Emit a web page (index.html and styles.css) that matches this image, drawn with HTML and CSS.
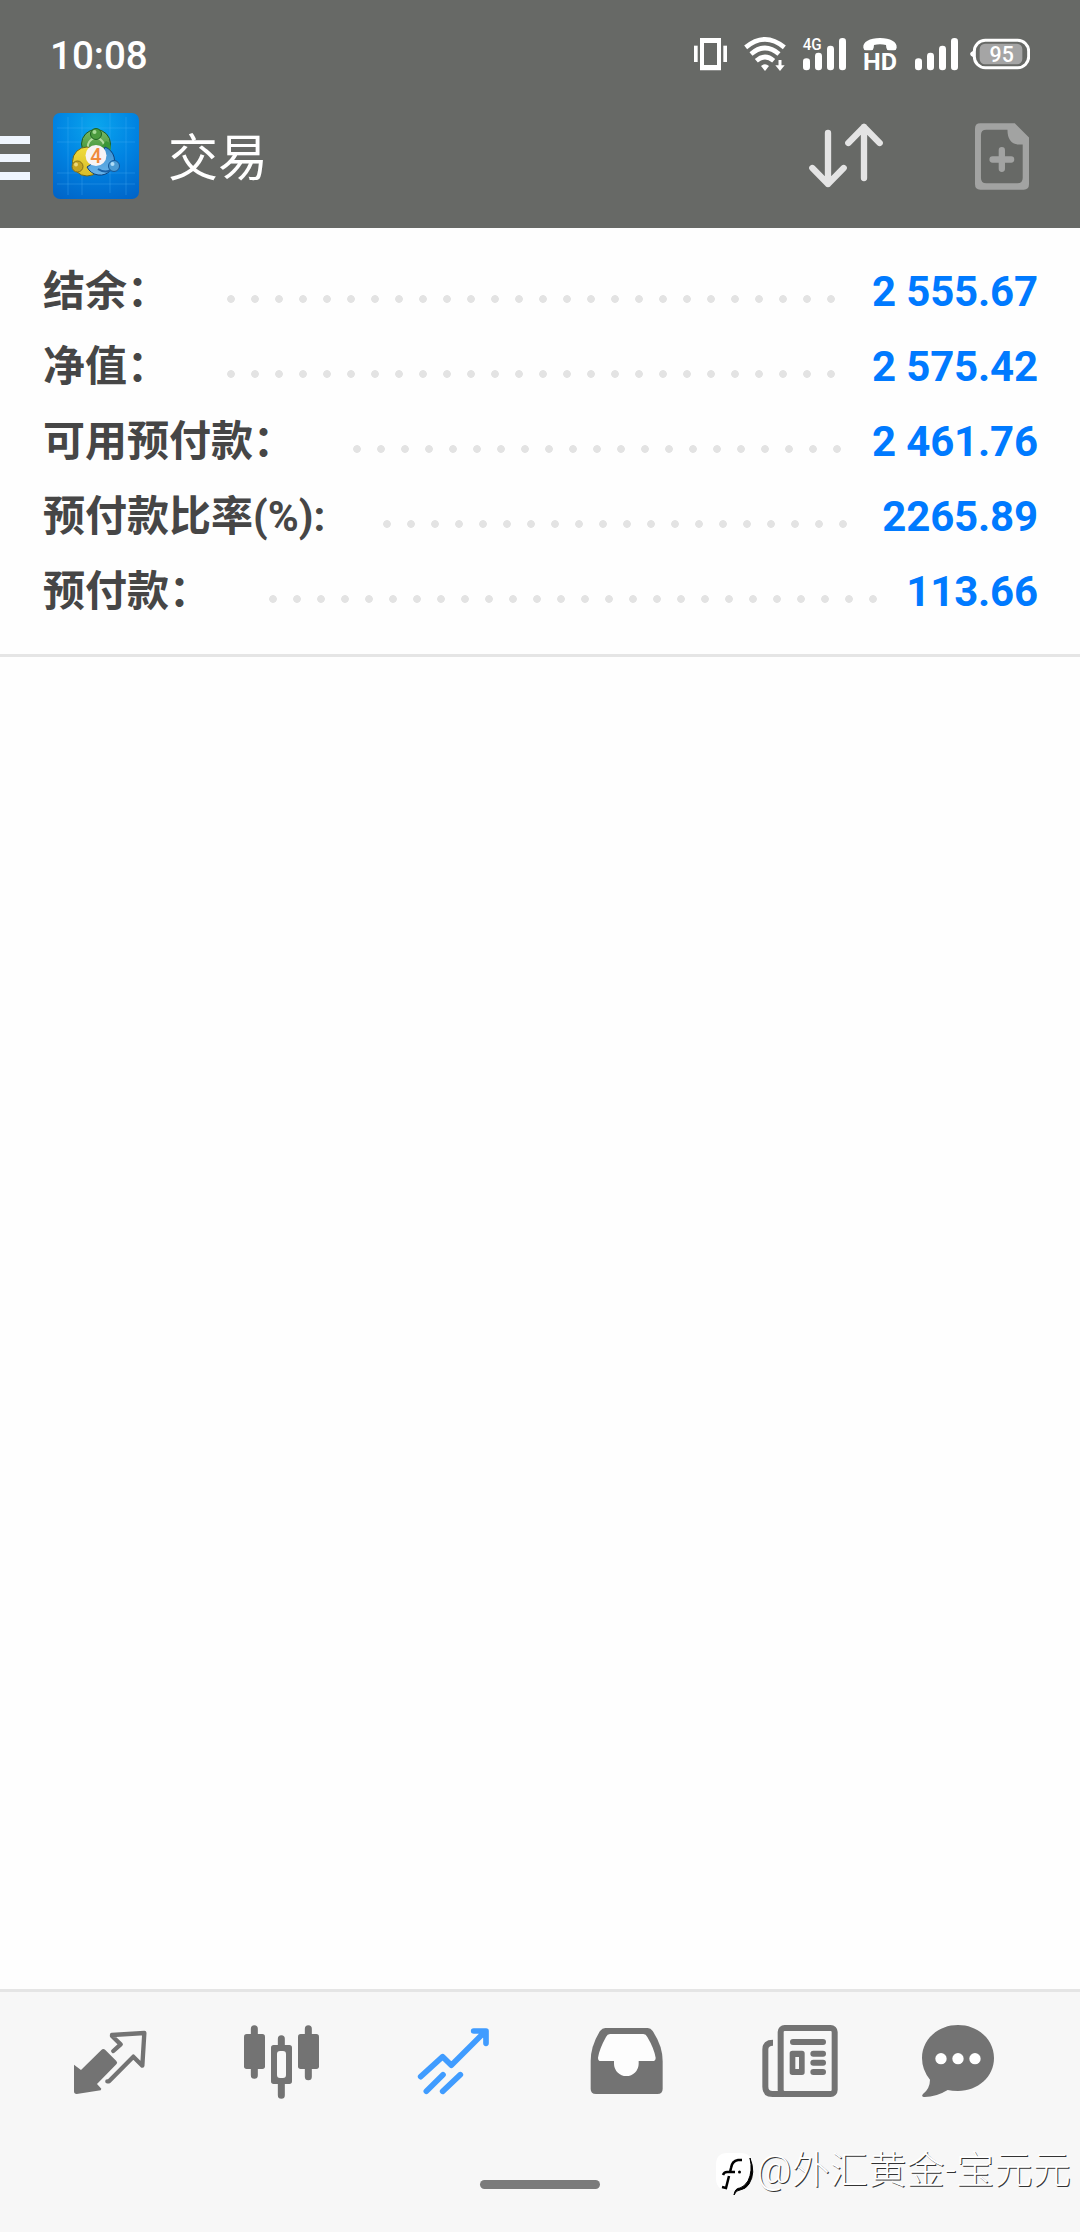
FILE: index.html
```html
<!DOCTYPE html>
<html lang="zh-CN">
<head>
    <meta charset="UTF-8">
    <title>交易</title>
    <link rel="stylesheet" href="styles.css">
</head>
<body>
<header class="header">
    <div class="status-bar">
        <span class="time">10:08</span>
        <div class="status-icons">
            <!-- vibrate -->
            <svg width="35" height="36" viewBox="39 48 105 108" fill="#fff">
                <path d="M60 54h63v97H60zM72 69v66h39V69z" fill-rule="evenodd"/>
                <rect x="42" y="77" width="11" height="49"/>
                <rect x="130" y="77" width="11" height="49"/>
            </svg>
            <!-- wifi -->
            <svg width="42" height="36" viewBox="192 48 126 108" fill="none" stroke="#fff" stroke-width="14">
                <path d="M197 82Q255 34 313 82"/>
                <path d="M213 102Q255 66 297 102"/>
                <path d="M229 122Q255 100 281 122"/>
                <path d="M243 138q12-10 24 0l-12 15z" fill="#fff" stroke="none"/>
                <path d="M300 120v22" stroke-width="9"/>
                <path d="M286 136h28l-14 17z" fill="#fff" stroke="none"/>
            </svg>
            <!-- 4G signal -->
            <svg width="45" height="36" viewBox="366 48 135 108" fill="#fff">
                <text class="net" x="368" y="90" textLength="57" lengthAdjust="spacingAndGlyphs">4G</text>
                <rect x="369" y="115" width="21" height="36" rx="10"/>
                <rect x="405" y="98" width="21" height="53" rx="10"/>
                <rect x="441" y="77" width="21" height="74" rx="10"/>
                <rect x="477" y="54" width="21" height="97" rx="10"/>
            </svg>
            <!-- HD call -->
            <svg class="hd-icon" width="34" height="36" viewBox="549 48 102 108" fill="#fff">
                <path d="M550 83C548 66 569 54 600 54s52 12 50 29q-1 8-8 8h-15q-7 0-8-8l-1-8q-18-5-36 0l-1 8q-1 8-8 8h-15q-7 0-8-8z"/>
                <text class="hd" x="549" y="150" textLength="102" lengthAdjust="spacingAndGlyphs">HD</text>
            </svg>
            <!-- signal -->
            <svg class="signal" width="45" height="36" viewBox="702 48 135 108" fill="#fff">
                <rect x="705" y="115" width="21" height="36" rx="10"/>
                <rect x="741" y="98" width="21" height="53" rx="10"/>
                <rect x="777" y="77" width="21" height="74" rx="10"/>
                <rect x="813" y="54" width="21" height="97" rx="10"/>
            </svg>
            <!-- battery -->
            <svg width="60" height="36" viewBox="870 48 180 108">
                <path d="M882 91l-9 6q-5 5 0 10l9 6z" fill="#fff"/>
                <rect x="883" y="61" width="163" height="82" rx="33" fill="none" stroke="#fff" stroke-width="9"/>
                <rect x="899" y="71" width="128" height="62" rx="16" fill="#a5a5a5"/>
                <text class="battery" x="965" y="126" text-anchor="middle">95</text>
            </svg>
        </div>
    </div>
    <div class="toolbar">
        <div class="menu"><i></i><i></i><i></i></div>
        <svg class="logo" width="86" height="86" viewBox="0 0 86 86">
            <defs>
                <radialGradient id="bg" cx=".5" cy=".15" r=".95">
                    <stop offset="0" stop-color="#0aa6ee"/>
                    <stop offset=".5" stop-color="#0083e2"/>
                    <stop offset="1" stop-color="#0064c8"/>
                </radialGradient>
                <linearGradient id="green" x2="0" y2="1">
                    <stop offset="0" stop-color="#7cba66"/>
                    <stop offset="1" stop-color="#2f8a2a"/>
                </linearGradient>
                <linearGradient id="gold" x2="0" y2="1">
                    <stop offset="0" stop-color="#f0dc3c"/>
                    <stop offset="1" stop-color="#d8bc2a"/>
                </linearGradient>
                <linearGradient id="blue" x2="0" y2="1">
                    <stop offset="0" stop-color="#3a8fd0"/>
                    <stop offset="1" stop-color="#6ab4ea"/>
                </linearGradient>
            </defs>
            <rect width="86" height="86" rx="7" fill="url(#bg)"/>
            <path d="M15 4v78M29 4v78M57 0v80M73 4v78M4 15h78M4 29h78M4 60h78M4 71h78" stroke="#4fb4f4" stroke-opacity=".3"/>
            <circle cx="43" cy="31" r="14.5" fill="url(#green)" stroke="#1c5a24"/>
            <path d="M36 37a8 8 0 1 1 14 0" fill="none" stroke="#b4dca0" stroke-width="2"/>
            <circle cx="34" cy="48.5" r="14.5" fill="url(#gold)" stroke="#6b661c"/>
            <path d="M57 30q3 10-5 20L43 40l10-12z" fill="#3b9636"/>
            <path d="M52 34a14.5 14.5 0 1 1-18 20l12-8z" fill="url(#blue)" stroke="#0b4380"/>
            <path d="M45 56q9 6 16-2" fill="none" stroke="#1a62a8" stroke-width="2"/>
            <circle cx="43" cy="21" r="5.5" fill="#4b9b3e" stroke="#1e6322"/>
            <circle cx="24.5" cy="53.5" r="5.5" fill="#c5a521" stroke="#85701a"/>
            <circle cx="61" cy="53" r="5.5" fill="#4b9bd4" stroke="#155796"/>
            <circle cx="41.5" cy="19" r="2" fill="#a4d894"/>
            <circle cx="23" cy="51.5" r="2" fill="#ecd878"/>
            <circle cx="59.5" cy="51" r="2" fill="#b0dcf6"/>
            <circle cx="43" cy="42.5" r="10.5" fill="#f6f3f5"/>
            <text class="logo-num" x="43" y="49.5" text-anchor="middle">4</text>
        </svg>
        <h1>交易</h1>
        <svg class="sort" width="76" height="68" viewBox="84 66 228 204" fill="none" stroke="#e4e4e4" stroke-width="19" stroke-linecap="round" stroke-linejoin="round">
            <path d="M144 99v153M97 204l47 48 47-48"/>
            <path d="M252 234V81M205 129l47-48 47 48"/>
        </svg>
        <svg class="new-order" width="54" height="67" viewBox="585 68 163 200">
            <path fill="#a2a3a2" fill-rule="evenodd" d="M601 68h104l43 43v141q0 16-16 16H601q-16 0-16-16V84q0-16 16-16zM619 87q-16 0-16 16v130q0 16 16 16h94q16 0 16-16V132h-14q-32-4-32-45z"/>
            <path d="M638 177h56M666 149v56" stroke="#a2a3a2" stroke-width="19" stroke-linecap="round"/>
        </svg>
    </div>
</header>

<main class="account">
    <div class="row"><span class="label">结余：</span><span class="dots"></span><span class="value">2 555.67</span></div>
    <div class="row"><span class="label">净值：</span><span class="dots"></span><span class="value">2 575.42</span></div>
    <div class="row"><span class="label">可用预付款：</span><span class="dots"></span><span class="value">2 461.76</span></div>
    <div class="row"><span class="label">预付款比率(%):</span><span class="dots"></span><span class="value">2265.89</span></div>
    <div class="row"><span class="label">预付款：</span><span class="dots"></span><span class="value">113.66</span></div>
</main>

<footer class="footer">
    <nav class="tabs">
        <!-- quotes -->
        <svg viewBox="150 150 360 240">
            <path d="M222 284l21 16 61-60q6-6 12 0l33 33q5 5 0 10l-58 59 13 14-2 5-72 11q-8 0-8-8z"/>
            <path class="line" d="M340 243l22-20-26-25v-3l97-6-6 98-27-27-73 74h-5" stroke-width="13"/>
        </svg>
        <!-- charts -->
        <svg viewBox="666 150 360 240">
            <rect x="732" y="192" width="63" height="105" rx="8"/>
            <rect x="894" y="192" width="63" height="105" rx="8"/>
            <path fill-rule="evenodd" d="M821 225h47q8 0 8 8v101q0 8-8 8h-47q-8 0-8-8V233q0-8 8-8zM840 243q-9 0-9 9v63q0 9 9 9h9q9 0 9-9v-63q0-9-9-9z"/>
            <path class="line" d="M763 176v20M763 292v24M844 206v22M844 338v38M925 176v20M925 292v28" stroke-width="21"/>
        </svg>
        <!-- trade -->
        <svg class="active" viewBox="102 150 360 240">
            <path class="line" d="M182 320l66-60 26 26L376 184M341 183h37v37M199 364l50-50M248 364l53-50" stroke-width="17"/>
            <path d="M350 183h28v28z"/>
        </svg>
        <!-- history -->
        <svg viewBox="618 150 360 240">
            <path d="M736 174h127q9 0 15 9 30 45 30 90v83q0 16-16 16H708q-16 0-16-16v-83q0-45 28-90 7-9 16-9z"/>
            <path fill="#fdfdfd" d="M750 192q-8 0-12 9-20 36-24 62 0 10 8 10h40v8a37 37 0 0 0 74 0v-8h42q9 0 9-10-5-28-25-62-4-9-12-9z"/>
        </svg>
        <!-- news -->
        <svg viewBox="54 150 360 240">
            <rect class="line" x="182" y="174" width="162" height="198" rx="12" stroke-width="18"/>
            <path class="line news-fold" d="M159 218q-23 0-23 20v112q0 22 22 22h34" stroke-width="18"/>
            <path class="line" d="M219 216h90M280 251h29M280 278h29M280 306h29" stroke-width="18"/>
            <path fill-rule="evenodd" d="M217 242h29q8 0 8 8v57q0 8-8 8h-29q-8 0-8-8v-57q0-8 8-8zM226 261v36h11v-36z"/>
        </svg>
        <!-- messages -->
        <svg viewBox="570 150 360 240">
            <path d="M714 165c60 0 108 43 108 99s-48 99-108 99q-18 0-31-3-36 22-72 21-8-2-2-9 21-17 21-43-24-29-24-65c0-56 48-99 108-99z"/>
            <g fill="#fff">
                <circle cx="663" cy="266" r="17"/>
                <circle cx="714" cy="266" r="17"/>
                <circle cx="765" cy="266" r="17"/>
            </g>
        </svg>
    </nav>
    <div class="home-bar"></div>
    <div class="watermark">
        <svg width="42" height="54" viewBox="0 -7 42 54">
            <path d="M12 3h14q11 0 11 12v8q0 14-12 17H12Q1 40 1 28V15Q1 3 12 3z" fill="#fff"/>
            <path d="M27 10h-4q-6 1-7 8l-1 4M8 25q1-3 4-3h8M14 26l-3 12-4-1" fill="none" stroke="#000" stroke-width="2.5"/>
            <path d="M35 8q6 15-1 26-3 5-9 6-4 0-6 5 1-7 6-7 4-1 8-7 5-10 2-23z" stroke="#000"/>
            <circle cx="24.5" cy="22" r="1.5"/>
        </svg>
        <span>@外汇黄金-宝元元</span>
    </div>
</footer>
</body>
</html>
```
FILE: styles.css
```css
body {
    font-family: Roboto, "Noto Sans CJK SC", sans-serif;
    background-color: #fefefe;
    display: flex;
    flex-direction: column;
    height: 2232px;
    margin: 0;
}
svg {
    display: block;
    flex: none;
}
.header {
    height: 228px;
    background-color: #676966;
    color: #fff;
}
.status-bar {
    display: flex;
    justify-content: space-between;
    align-items: center;
    height: 108px;
    padding: 0 50px 0 50px;
}
.time {
    font-size: 38.5px;
    font-weight: 500;
    padding-top: 2px;
}
.status-icons {
    display: flex;
    gap: 16px;
}
.hd-icon {
    margin-right: 1px;
    overflow: visible;
}
.signal {
    margin-right: -5px;
}
.net {
    font-size: 48px;
    font-weight: 500;
}
.hd {
    font-size: 70px;
    font-weight: 700;
}
.battery {
    font-size: 64px;
    font-weight: 500;
    fill: #fff;
}
.toolbar {
    display: flex;
    align-items: center;
    height: 96px;
    padding-right: 51px;
}
.menu {
    display: flex;
    flex-direction: column;
    gap: 10px;
    width: 53px;
    padding-top: 4px;
}
.menu i {
    width: 30px;
    height: 8px;
    background-color: #f0f6ff;
}
.logo-num {
    font-size: 20px;
    font-weight: 500;
    fill: #f08a3c;
}
.toolbar h1 {
    margin: 0 0 0 29px;
    padding-top: 6px;
    font-size: 50px;
    font-weight: 400;
    line-height: 72px;
}
.sort {
    margin-left: auto;
}
.new-order {
    margin-left: 91px;
}
.account {
    padding: 26px 42px 25px 43px;
    border-bottom: 3px solid #e5e5e5;
}
.row {
    display: flex;
    height: 75px;
    line-height: 75px;
    font-size: 42px;
    font-weight: 700;
}
.label {
    color: #464646;
}
.dots {
    flex: 1;
    height: 8px;
    margin: 41px 26px 0 58px;
    background: radial-gradient(circle at 4px 4px, #e3e3e3 3.5px, transparent 4.2px) 0 0 / 24px 8px;
}
.value {
    color: #007aff;
    letter-spacing: -0.15px;
}
.footer {
    position: relative;
    margin-top: auto;
    height: 240px;
    border-top: 3px solid #e5e5e5;
    background-color: #f7f7f7;
}
.tabs {
    display: grid;
    grid-template-columns: repeat(6, 1fr);
    justify-items: center;
    padding: 28px 24px 0;
}
.tabs svg {
    width: 120px;
    height: 80px;
    fill: #737373;
    stroke: none;
}
.tabs .active {
    fill: #409cff;
}
.tabs .line {
    fill: none;
    stroke: #737373;
    stroke-linecap: round;
    stroke-linejoin: round;
}
.tabs .active .line {
    stroke: #409cff;
}
.tabs .news-fold {
    stroke-linecap: butt;
}
.home-bar {
    width: 120px;
    height: 9px;
    margin: 80px auto 0;
    border-radius: 5px;
    background-color: #7b7b7b;
}
/* lies over the footer */
.watermark {
    position: absolute;
    right: 9px;
    bottom: 35px;
    display: flex;
    align-items: center;
    color: #fff;
    font-size: 38px;
    font-weight: 300;
    line-height: 54px;
    letter-spacing: 0.3px;
    text-shadow: 1px 1px 0 #333;
}
```
